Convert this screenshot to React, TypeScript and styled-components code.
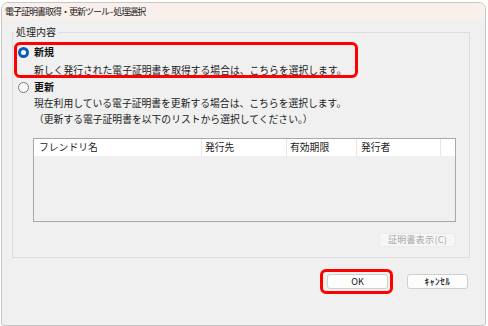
import React from "react";
import styled, { createGlobalStyle } from "styled-components";

const GlobalStyle = createGlobalStyle`
  html, body { margin: 0; padding: 0; background: #ffffff; }
  body {
    font-family: "Noto Sans CJK JP", "Noto Sans", sans-serif;
    color: #111;
  }
`;

const Window = styled.div`
  margin: 2px 0 0 1px;
  width: 485px;
  height: 324px;
  box-sizing: border-box;
  border: 1px solid #c6c6c6;
  border-radius: 7px 7px 3px 3px;
  overflow: hidden;
  display: flex;
  flex-direction: column;
  background: #f0f0f0;
`;

const TitleBar = styled.div`
  height: 16px;
  flex: none;
  background: #f9f0eb;
  display: flex;
  align-items: center;
  padding-left: 3px;
  font-size: 9px;
  letter-spacing: -1px;
  line-height: 1;
  color: #1b1b1b;
  white-space: nowrap;
`;

const Body = styled.div`
  flex: 1;
  display: flex;
  flex-direction: column;
  padding: 6px 15px 0 10px;
`;

const GroupBox = styled.fieldset`
  margin: 0;
  padding: 3px 0 10px 0;
  border: 1px solid #dcdcdc;
  min-width: 0;
`;

const Legend = styled.legend`
  margin-left: 1px;
  padding: 0 2px;
  font-size: 10px;
  line-height: 14px;
  color: #222;
`;

const Highlight = styled.div`
  box-sizing: border-box;
  border: 3px solid #ff0000;
  border-radius: 6px;
`;

const OptionHighlight = styled(Highlight)`
  margin-left: 1px;
  width: 344px;
  height: 36px;
  padding-left: 1px;
`;

const OptionRow = styled.div<{ $indent?: number; $top?: number }>`
  display: flex;
  align-items: center;
  gap: 5px;
  height: 14px;
  margin-left: ${(p) => p.$indent ?? 0}px;
  margin-top: ${(p) => p.$top ?? 0}px;
`;

const Radio = styled.span<{ $checked?: boolean }>`
  flex: none;
  width: 11px;
  height: 11px;
  box-sizing: border-box;
  border-radius: 50%;
  background: ${(p) => (p.$checked ? "#ffffff" : "#f8f8f8")};
  border: ${(p) => (p.$checked ? "3px solid #0b5cb5" : "1px solid #7b7b7b")};
`;

const OptionLabel = styled.span`
  font-size: 10px;
  font-weight: 700;
  line-height: 14px;
  color: #111;
`;

const Desc = styled.div<{ $indent: number; $top: number; $lh?: number }>`
  font-size: 9.8px;
  line-height: ${(p) => p.$lh ?? 14}px;
  margin-left: ${(p) => p.$indent}px;
  margin-top: ${(p) => p.$top}px;
  white-space: nowrap;
  color: #1a1a1a;
`;

const ListView = styled.div`
  margin: 12px 0 0 20px;
  width: 423px;
  height: 84px;
  box-sizing: border-box;
  border: 1px solid #a8a8a8;
  background: #f0f0f0;
`;

const HeaderRow = styled.div`
  display: flex;
  gap: 1px;
  width: 421px;
  height: 17px;
  background: #e6e6e6;
`;

const HeaderCell = styled.div<{ $w: number; $pad?: number }>`
  flex: none;
  width: ${(p) => p.$w}px;
  box-sizing: border-box;
  padding-left: ${(p) => p.$pad ?? 4}px;
  background: #ffffff;
  font-size: 9.8px;
  line-height: 17px;
  white-space: nowrap;
  overflow: hidden;
  color: #222;
`;

const ButtonRow = styled.div`
  display: flex;
  justify-content: flex-end;
  margin-top: 11px;
  padding-right: 13px;
`;

const DisabledButton = styled.button`
  width: 77px;
  height: 14px;
  padding: 0;
  box-sizing: border-box;
  border: 1px solid #ebebeb;
  border-radius: 3px;
  background: #f6f6f6;
  color: #a8a8a8;
  font-family: inherit;
  font-size: 9px;
  letter-spacing: 0.3px;
  line-height: 12px;
`;

const Footer = styled.div`
  display: flex;
  justify-content: flex-end;
  align-items: center;
  gap: 14px;
  margin-top: 11px;
  padding-right: 2px;
`;

const ButtonHighlight = styled(Highlight)`
  padding: 2px 2px 2px 4px;
`;

const PushButton = styled.button`
  width: 61px;
  height: 15px;
  padding: 0;
  box-sizing: border-box;
  border: 1px solid #cfcfcf;
  border-radius: 3px;
  background: #fdfdfd;
  color: #111;
  font-family: inherit;
  font-size: 9px;
  font-weight: 400;
  line-height: 13px;
  display: flex;
  align-items: center;
  justify-content: center;
`;

const CancelText = styled.span`
  font-size: 9.5px;
  letter-spacing: 0.4px;
  font-weight: 500;
`;

export default function App() {
  return (
    <>
      <GlobalStyle />
      <Window>
        <TitleBar>電子証明書取得・更新ツール - 処理選択</TitleBar>
        <Body>
          <GroupBox>
            <Legend>処理内容</Legend>
            <OptionHighlight>
              <OptionRow>
                <Radio $checked />
                <OptionLabel>新規</OptionLabel>
              </OptionRow>
              <Desc $indent={16} $top={5} $lh={12}>
                新しく発行された電子証明書を取得する場合は、こちらを選択します。
              </Desc>
            </OptionHighlight>
            <OptionRow $indent={5} $top={2}>
              <Radio />
              <OptionLabel>更新</OptionLabel>
            </OptionRow>
            <Desc $indent={21} $top={2}>
              現在利用している電子証明書を更新する場合は、こちらを選択します。
            </Desc>
            <Desc $indent={21} $top={2}>
              （更新する電子証明書を以下のリストから選択してください。）
            </Desc>
            <ListView>
              <HeaderRow>
                <HeaderCell $w={167} $pad={5}>フレンドリ名</HeaderCell>
                <HeaderCell $w={84} $pad={3}>発行先</HeaderCell>
                <HeaderCell $w={69} $pad={3}>有効期限</HeaderCell>
                <HeaderCell $w={83} $pad={4}>発行者</HeaderCell>
                <HeaderCell $w={14} />
              </HeaderRow>
            </ListView>
            <ButtonRow>
              <DisabledButton disabled>証明書表示(C)</DisabledButton>
            </ButtonRow>
          </GroupBox>
          <Footer>
            <ButtonHighlight>
              <PushButton>OK</PushButton>
            </ButtonHighlight>
            <PushButton>
              <CancelText>ｷｬﾝｾﾙ</CancelText>
            </PushButton>
          </Footer>
        </Body>
      </Window>
    </>
  );
}
